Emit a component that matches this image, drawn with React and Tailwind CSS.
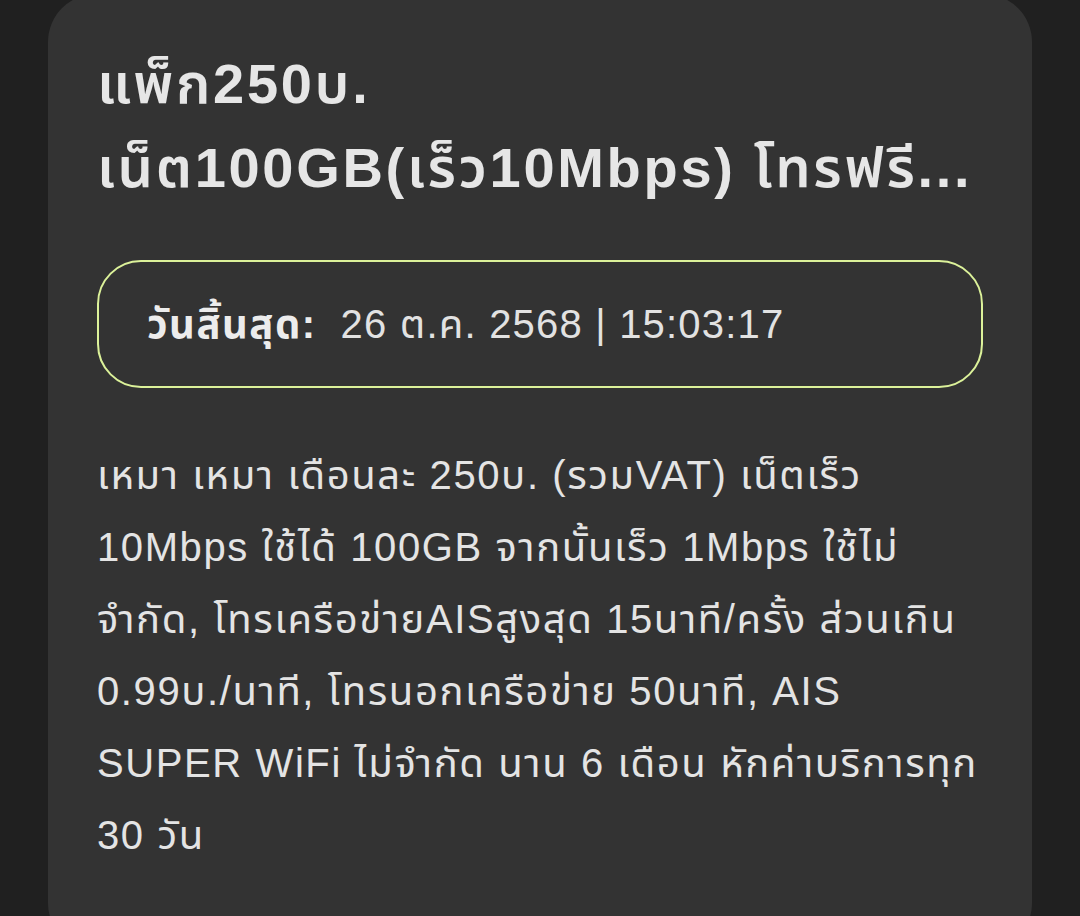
export default function App() {
  const font = { fontFamily: '"Liberation Sans", "Noto Sans", "Noto Sans Thai", sans-serif' };

  const lines = [
    'เหมา เหมา เดือนละ 250บ. (รวมVAT) เน็ตเร็ว',
    '10Mbps ใช้ได้ 100GB จากนั้นเร็ว 1Mbps ใช้ไม่',
    'จำกัด, โทรเครือข่ายAISสูงสุด 15นาที/ครั้ง ส่วนเกิน',
    '0.99บ./นาที, โทรนอกเครือข่าย 50นาที, AIS',
    'SUPER WiFi ไม่จำกัด นาน 6 เดือน หักค่าบริการทุก',
    '30 วัน',
  ];

  return (
    <div className="w-[1080px] h-[916px] overflow-hidden bg-[#202020] px-12" style={font}>
      <div className="-mt-[6px] bg-[#333333] rounded-[48px] px-[49px] pt-12 pb-20">
        <h1 className="text-[56px] leading-[84px] font-semibold text-[#e6e6e6] tracking-[2.7px]">
          <span className="block whitespace-nowrap">แพ็ก250บ.</span>
          <span className="block whitespace-nowrap">เน็ต100GB(เร็ว10Mbps) โทรฟรี...</span>
        </h1>

        <div className="mt-[50px] h-[128px] border-2 border-[#dcf29a] rounded-[44px] flex items-center pl-[48px]">
          <span className="text-[40px] font-bold text-[#ececec] whitespace-nowrap tracking-[1.5px]">วันสิ้นสุด:</span>
          <span className="ml-[24px] text-[40px] text-[#e2e2e2] whitespace-nowrap tracking-[1.2px]">26 ต.ค. 2568 | 15:03:17</span>
        </div>

        <div className="mt-[51px] text-[40px] leading-[72px] text-[#e4e4e4] tracking-[1.6px]">
          {lines.map((l) => (
            <span key={l} className="block whitespace-nowrap">{l}</span>
          ))}
        </div>
      </div>
    </div>
  );
}
